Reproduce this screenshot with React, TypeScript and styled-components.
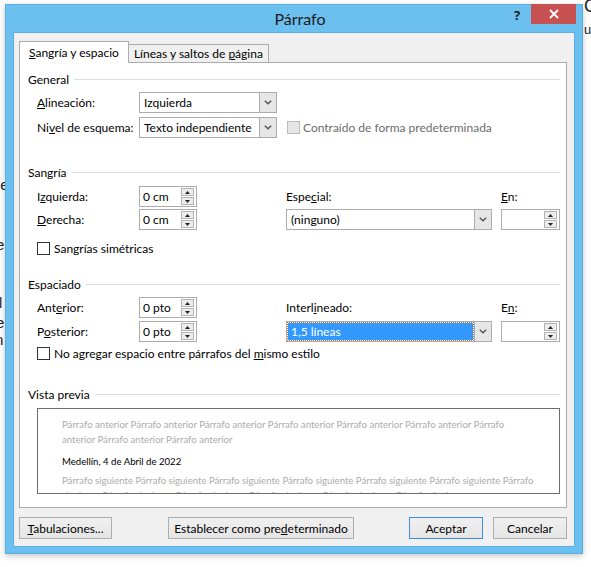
import React from 'react';
import styled, { createGlobalStyle } from 'styled-components';

const GlobalStyle = createGlobalStyle`
  html, body {
    margin: 0;
    padding: 0;
    background: #fff;
  }
  body {
    font-family: Lato, "Noto Sans", sans-serif;
    font-size: 12px;
    color: #000;
  }
`;

const Desktop = styled.div`
  position: relative;
  width: 591px;
  height: 567px;
  overflow: hidden;
  background: #fff;
`;

// bits of the Word document peeking out behind the dialog
const DocScrap = styled.span<{ $x: number; $y: number; $size?: number }>`
  position: absolute;
  left: ${p => p.$x}px;
  top: ${p => p.$y}px;
  font-family: "Liberation Sans", sans-serif;
  font-size: ${p => p.$size || 15}px;
  color: #222;
  white-space: nowrap;
`;

const Window = styled.div`
  position: absolute;
  left: 5px;
  top: 4px;
  width: 578px;
  height: 550px;
  box-sizing: border-box;
  background: #6bc0ef;
  border: 1px solid #58ade2;
  box-shadow: 0 2px 6px rgba(0, 0, 0, 0.22);
  display: flex;
  flex-direction: column;
`;

const TitleBar = styled.div`
  height: 27px;
  display: flex;
  align-items: flex-start;
  padding-left: 83px;
`;

const Title = styled.div`
  flex: 1;
  text-align: center;
  line-height: 27px;
  font-size: 16px;
  color: #1a1a1a;
`;

const HelpButton = styled.div`
  width: 12px;
  margin-right: 8px;
  line-height: 20px;
  font-family: "Noto Sans", sans-serif;
  font-weight: bold;
  font-size: 13px;
  color: #1a1a1a;
  text-align: center;
`;

const CloseButton = styled.div`
  width: 45px;
  height: 20px;
  margin-top: -1px;
  margin-right: 6px;
  background: #c75050;
  display: flex;
  align-items: center;
  justify-content: center;
`;

const Client = styled.div`
  flex: 1;
  margin: 0 7px 6px;
  background: #f0f0f0;
  border: 1px solid #5aaee3;
  padding: 8px 7px 0 5px;
  display: flex;
  flex-direction: column;
`;

const TabStrip = styled.div`
  position: relative;
  z-index: 1;
  display: flex;
  align-items: flex-end;
  height: 22px;
  margin-bottom: -1px;
`;

const Tab = styled.div<{ $active?: boolean }>`
  box-sizing: border-box;
  height: ${p => (p.$active ? 22 : 19)}px;
  padding: 0 ${p => (p.$active ? 9 : 5)}px;
  display: flex;
  align-items: center;
  background: ${p => (p.$active ? '#fff' : '#f0f0f0')};
  border: 1px solid #acacac;
  border-bottom: ${p => (p.$active ? 'none' : '1px solid #acacac')};
  border-left: ${p => (p.$active ? '1px solid #acacac' : 'none')};
  padding-bottom: ${p => (p.$active ? 1 : 0)}px;
`;

const Panel = styled.div`
  height: 446px;
  box-sizing: border-box;
  background: #fff;
  border: 1px solid #acacac;
  padding: 8px 6px 0 8px;
`;

const SectionHeader = styled.div<{ $mt?: number }>`
  display: flex;
  align-items: center;
  gap: 5px;
  height: 16px;
  margin-top: ${p => p.$mt || 0}px;
  &::after {
    content: '';
    flex: 1;
    height: 1px;
    background: #dcdcdc;
  }
`;

const Stack = styled.div<{ $mt: number; $gap: number }>`
  display: flex;
  flex-direction: column;
  gap: ${p => p.$gap}px;
  margin-top: ${p => p.$mt}px;
  padding-left: 9px;
`;

const FieldRow = styled.div`
  display: flex;
  align-items: center;
  height: 21px;
`;

const Label = styled.span<{ $width?: number }>`
  width: ${p => (p.$width ? `${p.$width}px` : 'auto')};
  flex: none;
  white-space: nowrap;
`;

const Key = styled.span`
  text-decoration: underline;
  text-underline-offset: 1px;
`;

const FieldGrid = styled.div<{ $mt: number; $gap: number }>`
  display: grid;
  grid-template-columns: 102px 58px 89px 206px 9px 59px;
  grid-auto-rows: 21px;
  row-gap: ${p => p.$gap}px;
  align-items: center;
  margin-top: ${p => p.$mt}px;
  padding-left: 9px;
`;

const Cell = styled.div<{ $col: number }>`
  grid-column: ${p => p.$col};
  white-space: nowrap;
`;

const SelectBox = styled.div<{ $width?: number }>`
  display: flex;
  width: ${p => (p.$width ? `${p.$width}px` : '100%')};
  height: 21px;
  box-sizing: border-box;
  border: 1px solid #acacac;
  background: #fff;
`;

const SelectValue = styled.span<{ $highlight?: boolean }>`
  flex: 1;
  display: flex;
  align-items: center;
  padding-left: ${p => (p.$highlight ? 3 : 4)}px;
  margin: ${p => (p.$highlight ? '1px' : '0')};
  background: ${p => (p.$highlight ? '#3399ff' : 'transparent')};
  color: ${p => (p.$highlight ? '#fff' : '#000')};
  outline: ${p => (p.$highlight ? '1px dotted #c8701e' : 'none')};
  white-space: nowrap;
`;

const SelectArrow = styled.span`
  width: 16px;
  margin: -1px -1px -1px 0;
  border: 1px solid #acacac;
  background: #e6e6e6;
  display: flex;
  align-items: center;
  justify-content: center;
`;

const SpinBox = styled.div`
  display: flex;
  align-items: center;
  height: 21px;
  box-sizing: border-box;
  border: 1px solid #acacac;
  background: #fff;
  padding: 0 2px 0 3px;
`;

const SpinValue = styled.span`
  flex: 1;
`;

const SpinButtons = styled.div`
  display: flex;
  flex-direction: column;
  gap: 1px;
`;

const SpinButton = styled.span`
  width: 13px;
  height: 8px;
  box-sizing: border-box;
  border: 1px solid #b4b4b4;
  background: #ececec;
  display: flex;
  align-items: center;
  justify-content: center;
`;

const CheckRow = styled.div<{ $mt: number }>`
  display: flex;
  align-items: center;
  gap: 4px;
  height: 16px;
  margin-top: ${p => p.$mt}px;
  padding-left: 9px;
`;

const CheckBox = styled.span<{ $disabled?: boolean }>`
  width: 13px;
  height: 13px;
  box-sizing: border-box;
  flex: none;
  border: 1px solid ${p => (p.$disabled ? '#bcbcbc' : '#333')};
  background: ${p => (p.$disabled ? '#e6e6e6' : '#fff')};
`;

const DisabledText = styled.span`
  color: #6d6d6d;
  margin-left: 3px;
  white-space: nowrap;
`;

const Preview = styled.div`
  margin: 6px 0 0 9px;
  width: 523px;
  height: 86px;
  box-sizing: border-box;
  border: 1px solid #6d6d6d;
  padding: 8px 24px 0;
  overflow: hidden;
  font-size: 9.6px;
  line-height: 15px;
`;

const PreviewPara = styled.p<{ $sample?: boolean; $mt?: number }>`
  margin: ${p => p.$mt || 0}px 0 0;
  color: ${p => (p.$sample ? '#000' : '#acacac')};
`;

const ButtonRow = styled.div`
  display: flex;
  margin-top: 9px;
`;

const Button = styled.div<{ $width: number; $default?: boolean; $ml?: number }>`
  width: ${p => p.$width}px;
  height: 22px;
  box-sizing: border-box;
  margin-left: ${p => (p.$ml === undefined ? 0 : `${p.$ml}px`)};
  border: 1px solid ${p => (p.$default ? '#3c8fe3' : '#adadad')};
  background: linear-gradient(#f0f0f0, #e5e5e5);
  display: flex;
  align-items: center;
  justify-content: center;
  white-space: nowrap;
`;

const ButtonSpacer = styled.div`
  flex: 1;
`;

const Chevron = () => (
  <svg width="8" height="5" viewBox="0 0 8 5">
    <path d="M0.8 0.8 L4 3.8 L7.2 0.8" fill="none" stroke="#555" strokeWidth="1.4" />
  </svg>
);

const Triangle = ({ down }: { down?: boolean }) => (
  <svg width="5" height="3" viewBox="0 0 5 3">
    <path d={down ? 'M0 0 H5 L2.5 3 Z' : 'M0 3 H5 L2.5 0 Z'} fill="#222" />
  </svg>
);

const Select = ({ value, width, highlight }: { value: string; width?: number; highlight?: boolean }) => (
  <SelectBox $width={width}>
    <SelectValue $highlight={highlight}>{value}</SelectValue>
    <SelectArrow>
      <Chevron />
    </SelectArrow>
  </SelectBox>
);

const Spinner = ({ value }: { value?: string }) => (
  <SpinBox>
    <SpinValue>{value}</SpinValue>
    <SpinButtons>
      <SpinButton>
        <Triangle />
      </SpinButton>
      <SpinButton>
        <Triangle down />
      </SpinButton>
    </SpinButtons>
  </SpinBox>
);

const anterior = Array(9).fill('Párrafo anterior').join(' ');
const siguiente = Array(12).fill('Párrafo siguiente').join(' ');

const App = () => {
  return (
    <Desktop>
      <GlobalStyle />
      <DocScrap $x={-3} $y={176}>le</DocScrap>
      <DocScrap $x={-4} $y={236}>e</DocScrap>
      <DocScrap $x={-1} $y={294}>l</DocScrap>
      <DocScrap $x={-4} $y={314}>e</DocScrap>
      <DocScrap $x={-5} $y={331}>n</DocScrap>
      <DocScrap $x={584} $y={-4} $size={18}>C</DocScrap>
      <DocScrap $x={584} $y={22} $size={13}>ue</DocScrap>

      <Window>
        <TitleBar>
          <Title>Párrafo</Title>
          <HelpButton>?</HelpButton>
          <CloseButton>
            <svg width="10" height="10" viewBox="0 0 10 10">
              <path d="M1 1 L9 9 M9 1 L1 9" stroke="#fff" strokeWidth="1.8" />
            </svg>
          </CloseButton>
        </TitleBar>

        <Client>
          <TabStrip>
            <Tab $active>
              <span>
                <Key>S</Key>angría y espacio
              </span>
            </Tab>
            <Tab>
              <span>
                Líneas y saltos de <Key>p</Key>ágina
              </span>
            </Tab>
          </TabStrip>

          <Panel>
            <SectionHeader>General</SectionHeader>
            <Stack $mt={5} $gap={4}>
              <FieldRow>
                <Label $width={102}>
                  <Key>A</Key>lineación:
                </Label>
                <Select value="Izquierda" width={138} />
              </FieldRow>
              <FieldRow>
                <Label $width={102}>
                  Ni<Key>v</Key>el de esquema:
                </Label>
                <Select value="Texto independiente" width={138} />
                <CheckBox $disabled style={{ marginLeft: 10 }} />
                <DisabledText>Contraído de forma predeterminada</DisabledText>
              </FieldRow>
            </Stack>

            <SectionHeader $mt={26}>Sangría</SectionHeader>
            <FieldGrid $mt={6} $gap={2}>
              <Cell $col={1}>
                I<Key>z</Key>quierda:
              </Cell>
              <Cell $col={2}>
                <Spinner value="0 cm" />
              </Cell>
              <Cell $col={4}>
                Espe<Key>c</Key>ial:
              </Cell>
              <Cell $col={6}>
                <Key>E</Key>n:
              </Cell>
              <Cell $col={1}>
                <Key>D</Key>erecha:
              </Cell>
              <Cell $col={2}>
                <Spinner value="0 cm" />
              </Cell>
              <Cell $col={4}>
                <Select value="(ninguno)" />
              </Cell>
              <Cell $col={6}>
                <Spinner />
              </Cell>
            </FieldGrid>
            <CheckRow $mt={10}>
              <CheckBox />
              <span>
                San<Key>g</Key>rías simétricas
              </span>
            </CheckRow>

            <SectionHeader $mt={20}>Espaciado</SectionHeader>
            <FieldGrid $mt={5} $gap={3}>
              <Cell $col={1}>
                Ant<Key>e</Key>rior:
              </Cell>
              <Cell $col={2}>
                <Spinner value="0 pto" />
              </Cell>
              <Cell $col={4}>
                Interl<Key>i</Key>neado:
              </Cell>
              <Cell $col={6}>
                E<Key>n</Key>:
              </Cell>
              <Cell $col={1}>
                P<Key>o</Key>sterior:
              </Cell>
              <Cell $col={2}>
                <Spinner value="0 pto" />
              </Cell>
              <Cell $col={4}>
                <Select value="1,5 líneas" highlight />
              </Cell>
              <Cell $col={6}>
                <Spinner />
              </Cell>
            </FieldGrid>
            <CheckRow $mt={3}>
              <CheckBox />
              <span>
                No agregar espacio entre párrafos del <Key>m</Key>ismo estilo
              </span>
            </CheckRow>

            <SectionHeader $mt={25}>Vista previa</SectionHeader>
            <Preview>
              <PreviewPara>{anterior}</PreviewPara>
              <PreviewPara $sample $mt={7}>
                Medellín, 4 de Abril de 2022
              </PreviewPara>
              <PreviewPara $mt={4}>{siguiente}</PreviewPara>
            </Preview>
          </Panel>

          <ButtonRow>
            <Button $width={93}>
              <span>
                <Key>T</Key>abulaciones...
              </span>
            </Button>
            <Button $width={186} $ml={56}>
              <span>
                Establecer como pre<Key>d</Key>eterminado
              </span>
            </Button>
            <ButtonSpacer />
            <Button $width={74} $default>
              Aceptar
            </Button>
            <Button $width={74} $ml={10}>
              Cancelar
            </Button>
          </ButtonRow>
        </Client>
      </Window>
    </Desktop>
  );
};

export default App;
